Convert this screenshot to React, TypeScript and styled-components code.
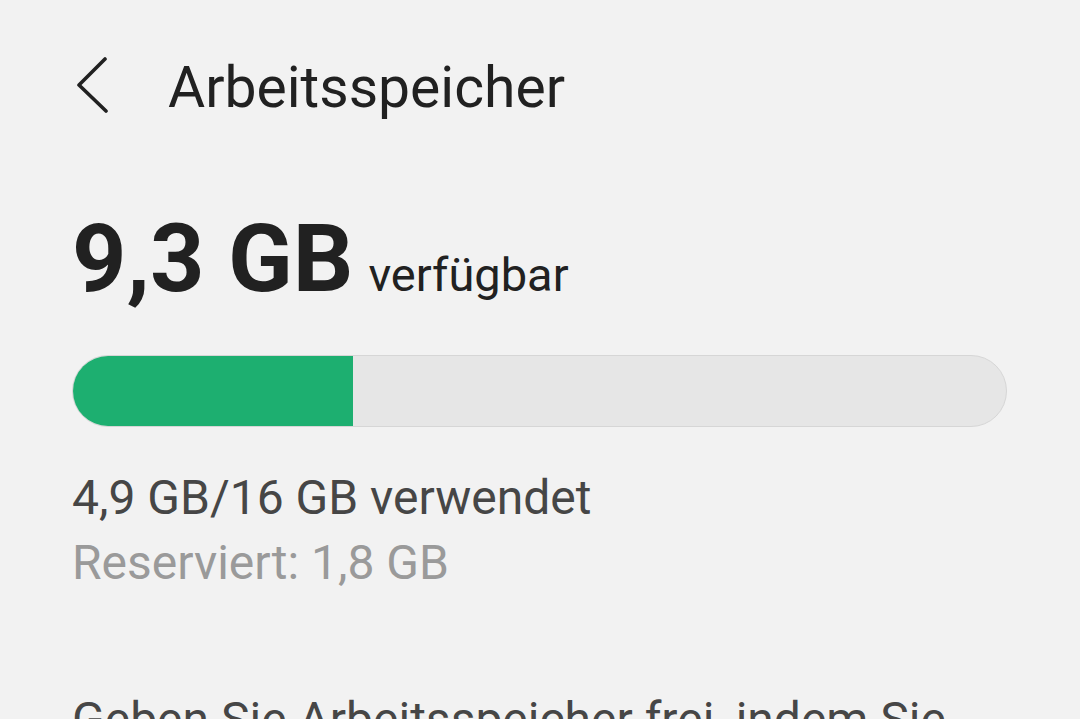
import React from 'react';
import styled, { createGlobalStyle } from 'styled-components';

const GlobalStyle = createGlobalStyle`
  html, body {
    margin: 0;
    padding: 0;
    background: #f2f2f2;
    overflow: hidden;
  }
  body {
    font-family: Roboto, "Noto Sans", sans-serif;
    -webkit-font-smoothing: antialiased;
  }
`;

const Page = styled.div`
  width: 1080px;
  height: 719px;
  overflow: hidden;
  background: #f2f2f2;
  box-sizing: border-box;
  padding: 0 73px 0 72px;
`;

const Header = styled.div`
  display: flex;
  align-items: center;
  height: 174px;
  gap: 56px;
`;

const BackButton = styled.button`
  display: flex;
  align-items: center;
  justify-content: center;
  background: none;
  border: none;
  padding: 0;
  width: 40px;
  height: 60px;
  cursor: pointer;
  color: #212121;
`;

const Title = styled.h1`
  margin: 0;
  font-size: 57px;
  font-weight: 400;
  color: #212121;
`;

const Available = styled.div`
  display: flex;
  align-items: baseline;
  gap: 15px;
  margin-top: 37px;
  height: 100px;
`;

const BigValue = styled.span`
  font-size: 95px;
  font-weight: 700;
  color: #212121;
  line-height: 1;
`;

const Unit = styled.span`
  font-size: 47px;
  font-weight: 400;
  color: #212121;
`;

const Track = styled.div`
  margin-top: 44px;
  height: 72px;
  border-radius: 36px;
  background: #e6e6e6;
  border: 1px solid #d6d6d6;
  box-sizing: border-box;
  overflow: hidden;
  display: flex;
`;

const Fill = styled.div`
  height: 100%;
  background: #1daf70;
`;

const Stats = styled.div`
  margin-top: 38px;
  display: flex;
  flex-direction: column;
`;

const StatLine = styled.div<{ $muted?: boolean }>`
  font-size: 48px;
  line-height: 65px;
  color: ${(p) => (p.$muted ? '#9a9a9a' : '#464646')};
`;

const Description = styled.p`
  margin: 92px 0 0;
  font-size: 48px;
  line-height: 65px;
  color: #464646;
`;

const Chevron = () => (
  <svg width="40" height="60" viewBox="0 0 40 60" fill="none">
    <path
      d="M33 2 L7 28 L34 54"
      stroke="currentColor"
      strokeWidth="3.6"
      strokeLinecap="round"
      strokeLinejoin="round"
    />
  </svg>
);

export default function App() {
  const usedShare = 30;
  return (
    <>
      <GlobalStyle />
      <Page>
        <Header>
          <BackButton aria-label="Zurück">
            <Chevron />
          </BackButton>
          <Title>Arbeitsspeicher</Title>
        </Header>
        <Available>
          <BigValue>9,3 GB</BigValue>
          <Unit>verfügbar</Unit>
        </Available>
        <Track>
          <Fill style={{ width: `${usedShare}%` }} />
        </Track>
        <Stats>
          <StatLine>4,9 GB/16 GB verwendet</StatLine>
          <StatLine $muted>Reserviert: 1,8 GB</StatLine>
        </Stats>
        <Description>
          Geben Sie Arbeitsspeicher frei, indem Sie Apps schließen, die Sie
          gerade nicht verwenden.
        </Description>
      </Page>
    </>
  );
}
